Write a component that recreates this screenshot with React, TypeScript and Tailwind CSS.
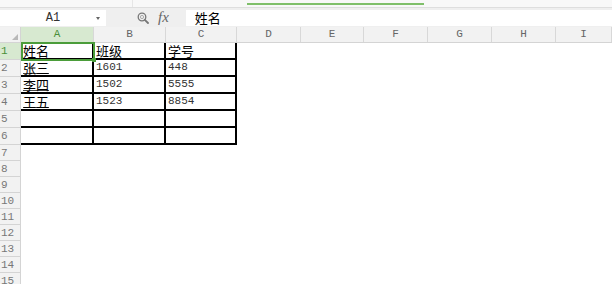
const cols = [
  { name: "A", w: "w-[73px]" },
  { name: "B", w: "w-[72px]" },
  { name: "C", w: "w-[71px]" },
  { name: "D", w: "w-[64px]" },
  { name: "E", w: "w-[63px]" },
  { name: "F", w: "w-[64px]" },
  { name: "G", w: "w-[64px]" },
  { name: "H", w: "w-[64px]" },
  { name: "I", w: "flex-1" },
];

const data = [
  ["姓名", "班级", "学号"],
  ["张三", "1601", "448"],
  ["李四", "1502", "5555"],
  ["王五", "1523", "8854"],
  ["", "", ""],
  ["", "", ""],
];

const mono = "font-['Liberation_Mono',monospace]";
const cjk = "font-['Noto_Sans_CJK_SC',sans-serif]";

function Cell({ v, col, row }: { v: string; col: number; row: number }) {
  const isNum = /^\d+$/.test(v);
  const linked = col === 0 && row > 0;
  return (
    <div
      className={`${cols[col].w} flex h-full shrink-0 items-end border-r-2 border-b-2 border-black pl-[2px] ${
        isNum ? `${mono} pb-[1px] text-[11px] leading-[13px] text-[#333]` : `${cjk} text-[13px] leading-[15px] text-black`
      }`}
    >
      {linked ? (
        <span className="underline decoration-[#444] underline-offset-[0px]">{v}</span>
      ) : (
        v
      )}
    </div>
  );
}

export default function App() {
  const rows = Array.from({ length: 15 }, (_, i) => i + 1);
  return (
    <div className="flex h-[284px] w-[612px] flex-col overflow-hidden bg-white">
      {/* ribbon remnant */}
      <div className="flex h-[8px] shrink-0 items-start border-b border-[#dedede] bg-[#f8f8f8]">
        <div className="h-full w-[133px] border-r border-[#e6e6e6]" />
        <div className="ml-[114px] mt-[3px] h-[2px] w-[177px] bg-[#7fbf6a]" />
      </div>

      {/* formula bar */}
      <div className="flex h-[19px] shrink-0 items-center bg-[#efefef]">
        <div className="relative flex h-[16px] w-[106px] items-center justify-center bg-white">
          <span className={`${mono} text-[12px] text-[#333]`}>A1</span>
          <span className="absolute right-[6px] top-[7px] h-0 w-0 border-x-[2px] border-t-[3px] border-x-transparent border-t-[#666]" />
        </div>
        <svg className="ml-[31px]" width="12" height="12" viewBox="0 0 12 12">
          <circle cx="5" cy="5" r="3.8" fill="none" stroke="#777" strokeWidth="1.3" />
          <circle cx="5" cy="5" r="1.6" fill="none" stroke="#999" strokeWidth="0.8" />
          <path d="M7.8 7.8 L11 11" stroke="#777" strokeWidth="1.8" strokeLinecap="round" />
        </svg>
        <span className="ml-[9px] font-['Liberation_Serif',serif] text-[15px] italic leading-none text-[#666]">
          fx
        </span>
        <div className="ml-[17px] flex h-[16px] flex-1 items-center bg-white pl-[9px]">
          <span className={`${cjk} text-[13px] leading-none text-black`}>姓名</span>
        </div>
      </div>

      {/* column headers */}
      <div className="flex h-[16px] shrink-0 border-b border-[#d4d4d4] bg-[#f2f2f2]">
        <div className="relative w-[21px] shrink-0 border-r border-[#d4d4d4]">
          <span className="absolute bottom-[2px] right-[2px] h-0 w-0 border-b-[6px] border-l-[6px] border-b-[#b8b8b8] border-l-transparent" />
        </div>
        {cols.map((c, i) => (
          <div
            key={c.name}
            className={`${c.w} flex shrink-0 items-center justify-center border-r border-[#d8d8d8] ${mono} text-[11px] ${
              i === 0 ? "bg-[#d7e9d0] text-[#4a8f3a]" : "text-[#666]"
            }`}
          >
            {c.name}
          </div>
        ))}
      </div>

      {/* body */}
      <div className="relative flex flex-1 flex-col">
        {rows.map((r) => (
          <div key={r} className={`flex shrink-0 ${r <= 6 ? "h-[17px]" : "h-[16px]"}`}>
            <div
              className={`flex w-[21px] shrink-0 items-center border-r border-b border-[#d4d4d4] pl-[1px] ${mono} text-[11px] leading-[12px] ${
                r === 1 ? "bg-[#d7e9d0] text-[#4a8f3a]" : "bg-[#f2f2f2] text-[#777]"
              }`}
            >
              {r}
            </div>
            {r <= 6 && data[r - 1].map((v, ci) => <Cell key={ci} v={v} col={ci} row={r - 1} />)}
          </div>
        ))}
        {/* A1 selection */}
        <div className="absolute left-[21px] top-[-1px] h-[19px] w-[74px] border-2 border-[#4b9d3a]">
          <span className="absolute -bottom-[3px] -right-[3px] h-[4px] w-[4px] bg-[#4b9d3a]" />
        </div>
      </div>
    </div>
  );
}
